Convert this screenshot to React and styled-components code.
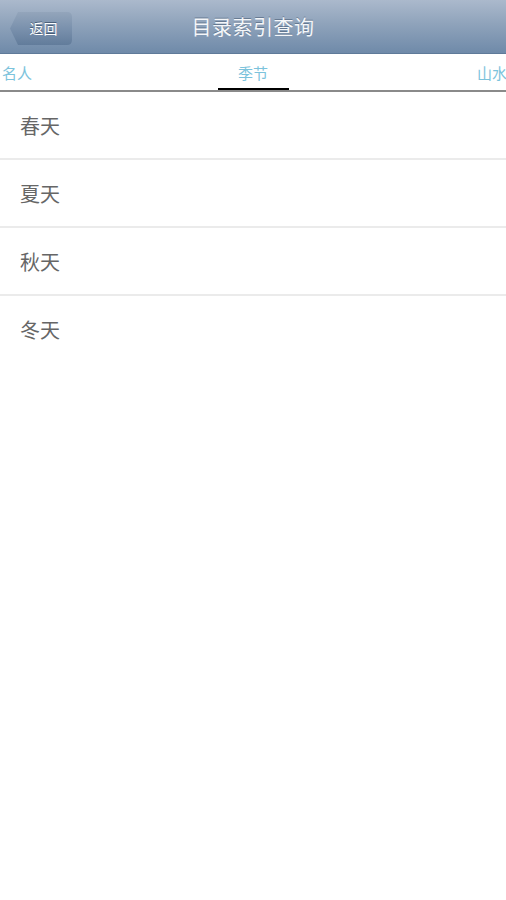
import React from "react";
import styled, { createGlobalStyle } from "styled-components";

const Global = createGlobalStyle`
  html, body { margin: 0; padding: 0; background: #ffffff; }
  body { font-family: "Noto Sans CJK SC", "Noto Sans", sans-serif; }
`;

const Page = styled.div`
  width: 506px;
  min-height: 900px;
  background: #ffffff;
  display: flex;
  flex-direction: column;
`;

const NavBar = styled.header`
  height: 54px;
  box-sizing: border-box;
  position: relative;
  display: flex;
  align-items: center;
  justify-content: center;
  background: linear-gradient(#abb9cc 0%, #8fa3bb 45%, #6f8aa9 100%);
  border-bottom: 1px solid #5f7a99;
`;

const Title = styled.h1`
  margin: 0;
  font-size: 20px;
  font-weight: 400;
  color: #f4f6f9;
  letter-spacing: 0.5px;
  text-shadow: 0 -1px 0 rgba(60, 80, 105, 0.5);
  line-height: 1;
`;

const BackButton = styled.button`
  position: absolute;
  left: 10px;
  top: 12px;
  width: 62px;
  height: 33px;
  border: none;
  padding: 0 0 0 5px;
  background: linear-gradient(#93a5bb 0%, #7a91ad 50%, #627c9b 100%);
  clip-path: path("M8 0 H57 Q62 0 62 5 V28 Q62 33 57 33 H8 L0 16.5 Z");
  color: #ffffff;
  font-family: "Noto Sans CJK SC", sans-serif;
  font-size: 14px;
  line-height: 33px;
  text-shadow: 0 -1px 0 rgba(40, 60, 85, 0.6);
`;

const TabBar = styled.nav`
  height: 38px;
  box-sizing: border-box;
  display: flex;
  align-items: stretch;
  justify-content: space-between;
  border-bottom: 2px solid #8a8a8a;
  overflow: hidden;
`;

const Tab = styled.div`
  position: relative;
  display: flex;
  align-items: center;
  justify-content: center;
  width: ${(p) => (p.$active ? "71px" : "auto")};
  margin: ${(p) => p.$margin || "0"};
  font-size: 15px;
  color: #7cc3dc;
  line-height: 1;
  padding-bottom: 0;
  &::after {
    content: "";
    display: ${(p) => (p.$active ? "block" : "none")};
    position: absolute;
    left: 0;
    right: 0;
    bottom: -2px;
    height: 4px;
    background: #000000;
  }
`;

const List = styled.ul`
  list-style: none;
  margin: 0;
  padding: 0;
`;

const Row = styled.li`
  height: 66px;
  display: flex;
  align-items: center;
  padding-left: 20px;
  font-size: 20px;
  color: #666666;
  border-bottom: ${(p) => (p.$last ? "none" : "2px solid #ebebeb")};
`;

const items = ["春天", "夏天", "秋天", "冬天"];

export default function App() {
  return (
    <Page>
      <Global />
      <NavBar>
        <BackButton>返回</BackButton>
        <Title>目录索引查询</Title>
      </NavBar>
      <TabBar>
        <Tab $margin="0 0 0 2px">名人</Tab>
        <Tab $active $margin="0 0 0 -3px">季节</Tab>
        <Tab $margin="0 -1px 0 0">山水</Tab>
      </TabBar>
      <List>
        {items.map((t, i) => (
          <Row key={t} $last={i === items.length - 1}>
            {t}
          </Row>
        ))}
      </List>
    </Page>
  );
}
